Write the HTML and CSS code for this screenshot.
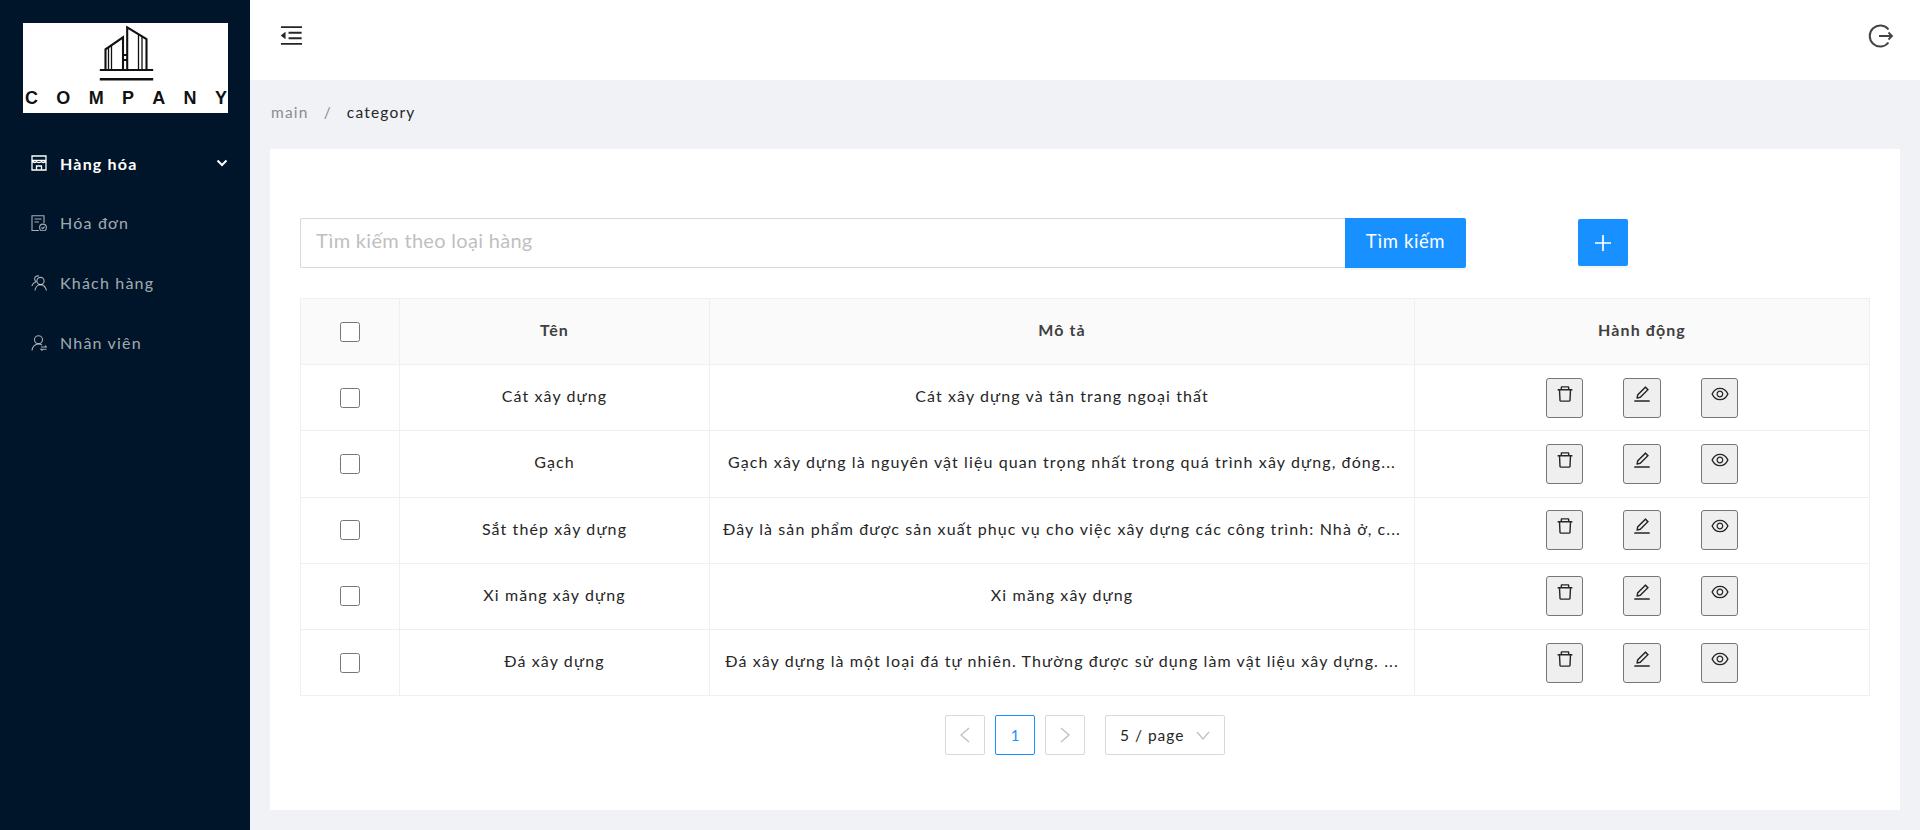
FILE: index.html
```html
<!doctype html>
<html>

<head>
    <meta charset="utf-8" />
    <title>Category</title>
    <link rel="stylesheet" href="styles.css">
</head>

<body>
	<div class="app">
	<aside class="sider">
		<div class="logo">
			<svg class="logo-mark" width="60" height="60" viewBox="0 0 60 60" fill="none" stroke="#111" stroke-width="2.100">
				<path d="M9.500 46V25.300L27 13.300V46M31.200 46V3.300L50.500 15V46"/>
				<path d="M12.500 46V24M15.500 46V22M42.500 46V11M46 46V13" stroke-width="1.300"/>
				<path d="M27 31H31.200M27 36H31.200"/>
				<path d="M3.800 46H57.200" stroke-width="2.200"/>
				<path d="M3.800 55.300H57.200" stroke-width="2.400"/>
			</svg>
			<div class="logo-text"><span>C</span><span>O</span><span>M</span><span>P</span><span>A</span><span>N</span><span>Y</span></div>
		</div>
		<ul class="menu">
			<li class="menu-item active">
				<svg class="menu-icon" width="16" height="16" viewBox="0 0 16 16" fill="none" stroke="currentColor" stroke-width="1.300">
					<path d="M1 1H15V15H1ZM1 5.500H15M1 5.500C2 8 5 8 5.500 6.500C6.500 8 9.500 8 10.500 6.500C11 8 14 8 15 5.500M5.500 15V11H10.500V15"/>
				</svg>
				<span>Hàng hóa</span>
				<svg class="menu-arrow" width="12" height="8" viewBox="0 0 12 8" fill="none" stroke="currentColor" stroke-width="2"><path d="M1.500 1.500L6 6L10.500 1.500"/></svg>
			</li>
			<li class="menu-item">
				<svg class="menu-icon" width="16" height="16" viewBox="0 0 16 16" fill="none" stroke="currentColor" stroke-width="1.100">
					<path d="M8 15.500H1V.7H13V8M3.500 4H10.500M3.500 7H8"/>
					<circle cx="12" cy="12.500" r="3.400"/>
					<path d="M10.500 12.500L11.700 13.700L13.600 11.600"/>
				</svg>
				<span>Hóa đơn</span>
			</li>
			<li class="menu-item">
				<svg class="menu-icon" width="16" height="16" viewBox="0 0 16 16" fill="none" stroke="currentColor" stroke-width="1.100">
					<circle cx="9.500" cy="6" r="3.600"/>
					<path d="M4 15.500C4.500 12 7 9.600 9.500 9.600C12 9.600 14.500 12 15.500 15.500M8 1C5.500 .3 3.500 2 3.600 4C3.700 5.500 4.500 6.300 5 6.700C3 7.500 1.500 9 .8 11"/>
				</svg>
				<span>Khách hàng</span>
			</li>
			<li class="menu-item">
				<svg class="menu-icon" width="16" height="16" viewBox="0 0 16 16" fill="none" stroke="currentColor" stroke-width="1.100">
					<circle cx="7.500" cy="4.800" r="4"/>
					<path d="M1 15.500C1.200 12 4 9 7.500 9C9 9 10 9.400 11 10M10 12H15.500L14 10.600M15.500 14.300H10L11.500 15.700"/>
				</svg>
				<span>Nhân viên</span>
			</li>
		</ul>
	</aside>

	<div class="main">
		<header class="topbar">
			<svg class="icon-fold" width="27" height="27" viewBox="0 0 1024 1024" fill="#262626"><path d="M408 442h480c4.400 0 8-3.600 8-8v-56c0-4.400-3.600-8-8-8H408c-4.400 0-8 3.600-8 8v56c0 4.400 3.600 8 8 8zm-8 204c0 4.400 3.600 8 8 8h480c4.400 0 8-3.600 8-8v-56c0-4.400-3.600-8-8-8H408c-4.400 0-8 3.600-8 8v56zm504-486H120c-4.400 0-8 3.600-8 8v56c0 4.400 3.600 8 8 8h784c4.400 0 8-3.600 8-8v-56c0-4.400-3.600-8-8-8zm0 632H120c-4.400 0-8 3.600-8 8v56c0 4.400 3.600 8 8 8h784c4.400 0 8-3.600 8-8v-56c0-4.400-3.600-8-8-8zM115.400 518.900L271.700 642c5.800 4.600 14.400.5 14.400-6.900V388.900c0-7.400-8.500-11.500-14.400-6.900L115.400 505.100a8.740 8.740 0 0 0 0 13.800z"/></svg>
			<svg class="icon-logout" width="26" height="26" viewBox="0 0 26 26" fill="none" stroke="#444" stroke-width="2"><path d="M20.500 6.500A10.500 10.500 0 1 0 20.500 19.500"/><path d="M11 13H24M20.500 9.500L24 13L20.500 16.500" stroke-width="1.800"/></svg>
		</header>

		<nav class="crumbs"><span class="crumb-link">main</span><span class="crumb-sep">/</span><span class="crumb-cur">category</span></nav>

		<section class="card">
			<div class="toolbar">
				<div class="search">
					<input class="search-input" type="text" placeholder="Tìm kiếm theo loại hàng">
					<button class="btn-primary search-btn" type="button">Tìm kiếm</button>
				</div>
				<button class="btn-primary add-btn" type="button" aria-label="add">
					<svg width="18" height="18" viewBox="0 0 18 18" stroke="#fff" stroke-width="1.700"><path d="M9 1V17M1 9H17"/></svg>
				</button>
			</div>

			<table class="grid">
				<colgroup><col class="col-check"><col class="col-name"><col class="col-desc"><col class="col-act"></colgroup>
				<thead>
					<tr><th><input type="checkbox" class="check"></th><th>Tên</th><th>Mô tả</th><th>Hành động</th></tr>
				</thead>
				<tbody>
					<tr>
						<td><input type="checkbox" class="check"></td>
						<td>Cát xây dựng</td>
						<td class="desc">Cát xây dựng và tân trang ngoại thất</td>
						<td>
							<div class="acts">
							<button type="button" class="act"><svg class="act-icon" viewBox="0 0 1024 1024"><use href="#i-del"/></svg></button>
							<button type="button" class="act"><svg class="act-icon" viewBox="0 0 1024 1024"><use href="#i-edit"/></svg></button>
							<button type="button" class="act"><svg class="act-icon" viewBox="0 0 1024 1024"><use href="#i-eye"/></svg></button>
							</div>
						</td>
					</tr>
					<tr>
						<td><input type="checkbox" class="check"></td>
						<td>Gạch</td>
						<td class="desc">Gạch xây dựng là nguyên vật liệu quan trọng nhất trong quá trình xây dựng, đóng...</td>
						<td>
							<div class="acts">
							<button type="button" class="act"><svg class="act-icon" viewBox="0 0 1024 1024"><use href="#i-del"/></svg></button>
							<button type="button" class="act"><svg class="act-icon" viewBox="0 0 1024 1024"><use href="#i-edit"/></svg></button>
							<button type="button" class="act"><svg class="act-icon" viewBox="0 0 1024 1024"><use href="#i-eye"/></svg></button>
							</div>
						</td>
					</tr>
					<tr>
						<td><input type="checkbox" class="check"></td>
						<td>Sắt thép xây dựng</td>
						<td class="desc">Đây là sản phẩm được sản xuất phục vụ cho việc xây dựng các công trình: Nhà ở, c...</td>
						<td>
							<div class="acts">
							<button type="button" class="act"><svg class="act-icon" viewBox="0 0 1024 1024"><use href="#i-del"/></svg></button>
							<button type="button" class="act"><svg class="act-icon" viewBox="0 0 1024 1024"><use href="#i-edit"/></svg></button>
							<button type="button" class="act"><svg class="act-icon" viewBox="0 0 1024 1024"><use href="#i-eye"/></svg></button>
							</div>
						</td>
					</tr>
					<tr>
						<td><input type="checkbox" class="check"></td>
						<td>Xi măng xây dựng</td>
						<td class="desc">Xi măng xây dựng</td>
						<td>
							<div class="acts">
							<button type="button" class="act"><svg class="act-icon" viewBox="0 0 1024 1024"><use href="#i-del"/></svg></button>
							<button type="button" class="act"><svg class="act-icon" viewBox="0 0 1024 1024"><use href="#i-edit"/></svg></button>
							<button type="button" class="act"><svg class="act-icon" viewBox="0 0 1024 1024"><use href="#i-eye"/></svg></button>
							</div>
						</td>
					</tr>
					<tr>
						<td><input type="checkbox" class="check"></td>
						<td>Đá xây dựng</td>
						<td class="desc">Đá xây dựng là một loại đá tự nhiên. Thường được sử dụng làm vật liệu xây dựng. ...</td>
						<td>
							<div class="acts">
							<button type="button" class="act"><svg class="act-icon" viewBox="0 0 1024 1024"><use href="#i-del"/></svg></button>
							<button type="button" class="act"><svg class="act-icon" viewBox="0 0 1024 1024"><use href="#i-edit"/></svg></button>
							<button type="button" class="act"><svg class="act-icon" viewBox="0 0 1024 1024"><use href="#i-eye"/></svg></button>
							</div>
						</td>
					</tr>
				</tbody>
			</table>

			<div class="pager">
				<span class="page-box"><svg width="12" height="16" viewBox="0 0 12 16" fill="none" stroke="#bfbfbf" stroke-width="1.300"><path d="M10 1L2 8L10 15"/></svg></span>
				<span class="page-box current">1</span>
				<span class="page-box"><svg width="12" height="16" viewBox="0 0 12 16" fill="none" stroke="#bfbfbf" stroke-width="1.300"><path d="M2 1L10 8L2 15"/></svg></span>
				<span class="page-size">5 / page <svg width="14" height="9" viewBox="0 0 14 9" fill="none" stroke="#bfbfbf" stroke-width="1.200"><path d="M1 1L7 8L13 1"/></svg></span>
			</div>
		</section>
	</div>
	</div>

	<svg class="defs" width="0" height="0">
		<symbol id="i-del" viewBox="0 0 1024 1024"><path d="M360 184h-8c4.400 0 8-3.600 8-8v8h304v-8c0 4.400 3.600 8 8 8h-8v72h72v-80c0-35.300-28.700-64-64-64H352c-35.300 0-64 28.700-64 64v80h72v-72zm504 72H160c-17.700 0-32 14.300-32 32v32c0 4.400 3.600 8 8 8h60.400l24.700 523c1.600 34.100 29.800 61 63.900 61h454c34.200 0 62.300-26.800 63.900-61l24.700-523H888c4.400 0 8-3.600 8-8v-32c0-17.700-14.300-32-32-32zM731.300 840H292.700l-24.200-512h487l-24.200 512z"/></symbol>
		<symbol id="i-edit" viewBox="0 0 1024 1024"><path d="M257.700 752c2 0 4-.2 6-.5L431.900 722c2-.4 3.900-1.300 5.300-2.800l423.900-423.900a9.960 9.960 0 0 0 0-14.100L694.900 114.900c-1.900-1.900-4.400-2.900-7.100-2.900s-5.200 1-7.100 2.900L256.800 538.800c-1.500 1.500-2.400 3.300-2.800 5.300l-29.500 168.200a33.500 33.500 0 0 0 9.400 29.800c6.600 6.400 14.900 9.900 23.800 9.900zm67.400-174.400L687.800 215l73.300 73.300-362.700 362.600-88.900 15.700 15.600-89zM880 836H144c-17.700 0-32 14.300-32 32v36c0 4.400 3.600 8 8 8h784c4.400 0 8-3.600 8-8v-36c0-17.700-14.300-32-32-32z"/></symbol>
		<symbol id="i-eye" viewBox="0 0 1024 1024"><path d="M942.200 486.200C847.400 286.500 704.100 186 512 186c-192.200 0-335.400 100.500-430.200 300.300a60.300 60.300 0 0 0 0 51.500C176.600 737.500 319.900 838 512 838c192.200 0 335.400-100.500 430.200-300.300 7.700-16.200 7.700-35 0-51.500zM512 766c-161.300 0-279.400-81.800-362.700-254C232.600 339.800 350.700 258 512 258c161.300 0 279.400 81.800 362.700 254C791.500 684.200 673.400 766 512 766zm-4-430c-97.200 0-176 78.800-176 176s78.800 176 176 176 176-78.800 176-176-78.800-176-176-176zm0 288c-61.900 0-112-50.100-112-112s50.100-112 112-112 112 50.100 112 112-50.100 112-112 112z"/></symbol>
	</svg>
</body>

</html>
```

FILE: styles.css
```css
* {
	margin: 0;
	padding: 0;
	box-sizing: border-box;
}

body {
	font-family: "Lato", "Noto Sans", sans-serif;
	font-size: 15px;
	color: #262626;
	background: #f0f2f5;
	overflow: hidden;
}

.app {
	display: flex;
	height: 830px;
}

.defs {
	display: block;
	height: 0;
}

/* sidebar */
.sider {
	width: 250px;
	flex: none;
	background: #001529;
	padding: 23px 22px 0 23px;
}

.logo {
	height: 90px;
	background: #fff;
	display: flex;
	flex-direction: column;
	align-items: center;
}

.logo-mark {
	margin-top: 1px;
	flex: none;
}

.logo-text {
	width: 100%;
	display: flex;
	justify-content: space-between;
	padding: 5px 1px 0 2px;
	font-family: "Liberation Sans", sans-serif;
	font-size: 18px;
	font-weight: 700;
	line-height: 18px;
	color: #111;
}

.menu {
	list-style: none;
	margin-top: 30px;
}

.menu-item {
	height: 40px;
	margin-bottom: 20px;
	padding-left: 8px;
	display: flex;
	align-items: center;
	color: rgba(255, 255, 255, .65);
	font-size: 16px;
	letter-spacing: 1.200px;
}

.menu-item span {
	padding-bottom: 2px;
}

.menu-item.active {
	color: #fff;
	font-weight: 700;
}

.menu-item.active span {
	padding-bottom: 0;
}

.menu-icon {
	flex: none;
	margin-right: 13px;
}

.menu-arrow {
	margin-left: auto;
}

/* header */
.main {
	flex: 1;
	display: flex;
	flex-direction: column;
	min-width: 0;
}

.topbar {
	height: 80px;
	flex: none;
	background: #fff;
	display: flex;
	align-items: center;
	justify-content: space-between;
	padding: 0 26px 9px 28px;
}

.crumbs {
	height: 69px;
	flex: none;
	padding: 0 20px 5px 21px;
	display: flex;
	align-items: center;
	font-size: 15.500px;
	letter-spacing: 1.200px;
}

.crumb-link {
	color: #8c8c8c;
}

.crumb-sep {
	margin: 0 15px;
	color: #8c8c8c;
}

.crumb-cur {
	color: #262626;
}

/* content */
.card {
	margin: 0 20px 20px 20px;
	flex: 1;
	background: #fff;
	padding: 69px 30px 0 30px;
}

.toolbar {
	display: flex;
	align-items: flex-start;
}

.search {
	width: 1166px;
	display: flex;
	height: 50px;
}

.search-input {
	flex: 1;
	min-width: 0;
	border: 1px solid #d9d9d9;
	border-right: none;
	border-radius: 2px 0 0 2px;
	padding: 0 15px 6px;
	font-family: inherit;
	font-size: 20px;
	letter-spacing: .3px;
	outline: none;
}

.search-input::placeholder {
	color: #bfbfbf;
}

.btn-primary {
	background: #1890ff;
	border: none;
	color: #fff;
	border-radius: 2px;
	font-family: inherit;
	box-shadow: 0 2px 0 rgba(0, 0, 0, .045);
}

.search-btn {
	width: 121px;
	font-size: 18.500px;
	letter-spacing: .6px;
	padding-bottom: 5px;
	border-radius: 0 2px 2px 0;
}

.add-btn {
	width: 50px;
	height: 47px;
	margin-top: 1px;
	margin-left: 112px;
	display: flex;
	align-items: center;
	justify-content: center;
}

/* table */
.grid {
	width: 1570px;
	margin-top: 30px;
	border-collapse: collapse;
	table-layout: fixed;
	border: 1px solid #f0f0f0;
}

.col-check {
	width: 99px;
}

.col-name {
	width: 310px;
}

.col-desc {
	width: 705px;
}

.grid th,
.grid td {
	height: 66.200px;
	text-align: center;
	border-bottom: 1px solid #f0f0f0;
	border-right: 1px solid #f0f0f0;
	font-size: 16px;
	letter-spacing: 1.100px;
}

.grid th {
	background: #fafafa;
	font-weight: 700;
	color: #404040;
}

.grid th:nth-child(n+2),
.grid td:nth-child(-n+3) {
	padding-bottom: 4px;
}

.grid td:first-child {
	padding-bottom: 0;
}

.grid .desc {
	padding-left: 10px;
	padding-right: 10px;
	white-space: nowrap;
	overflow: hidden;
	text-overflow: ellipsis;
}

.check {
	display: block;
	width: 20px;
	height: 20px;
	margin: 0 auto;
}

.acts {
	display: flex;
	justify-content: center;
	gap: 40px;
}

.act {
	width: 37px;
	height: 40px;
	background: #efefef;
	border: 1px solid #767676;
	border-radius: 3px;
	padding-bottom: 5px;
}

.act:nth-child(2) {
	width: 38px;
}

.act-icon {
	width: 20px;
	height: 20px;
	fill: #262626;
}

/* pagination */
.pager {
	margin-top: 19px;
	display: flex;
	justify-content: center;
	gap: 10px;
}

.page-box {
	width: 40px;
	height: 40px;
	border: 1px solid #d9d9d9;
	border-radius: 2px;
	display: flex;
	align-items: center;
	justify-content: center;
}

.page-box.current {
	border-color: #1890ff;
	color: #1890ff;
}

.page-size {
	width: 120px;
	height: 40px;
	margin-left: 10px;
	border: 1px solid #d9d9d9;
	border-radius: 2px;
	padding: 0 14px;
	display: flex;
	align-items: center;
	justify-content: space-between;
	font-size: 15.500px;
	letter-spacing: 1px;
}
```
